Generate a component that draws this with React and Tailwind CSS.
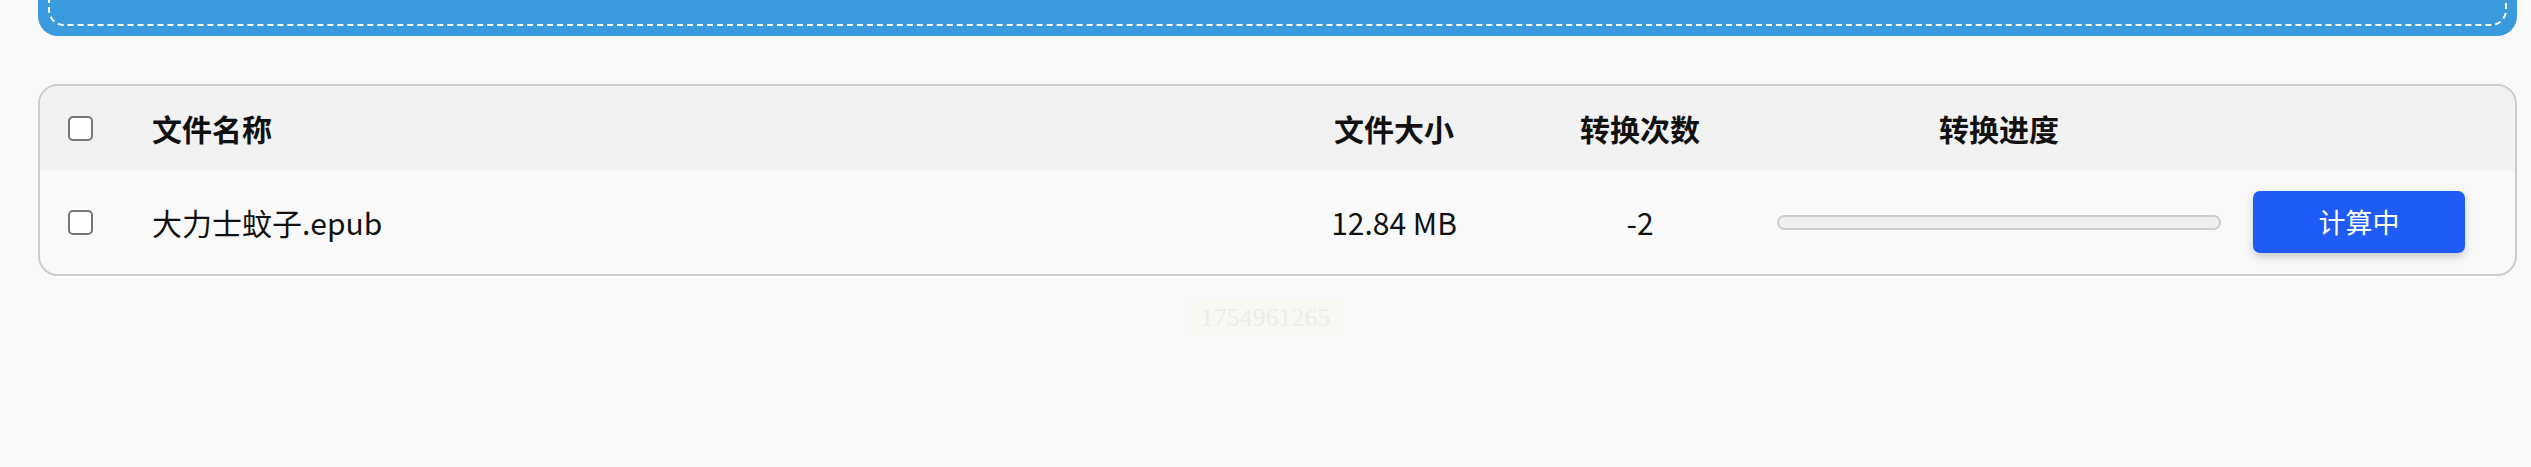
import { useState } from 'react';

const files = [{ id: 1, name: '大力士蚊子.epub', size: '12.84 MB', count: -2, progress: 0 }];

function Check({ checked, onChange }) {
  return (
    <input
      type="checkbox"
      checked={checked}
      onChange={onChange}
      className="appearance-none w-[25px] h-[25px] border-[2.5px] border-[#767676] rounded-[5px] bg-white"
    />
  );
}

export default function App() {
  const [selected, setSelected] = useState({});
  const allChecked = files.every((f) => selected[f.id]);

  return (
    <div
      className="min-h-screen bg-[#f9f9f9] pl-[38px] pr-[14px] pb-10 overflow-hidden"
      style={{ fontFamily: '"Noto Sans CJK SC", "Noto Sans", sans-serif' }}
    >
      {/* upload drop zone (scrolled past) */}
      <div className="mt-[-200px] h-[236px] rounded-[20px] bg-[#3a9ade] p-[10px]">
        <div className="h-full rounded-[16px] border-2 border-dashed border-white" />
      </div>

      {/* file table */}
      <div className="mt-[48px] rounded-[20px] border-2 border-[#cccccc] overflow-hidden bg-[#f9f9f9] text-[30px] text-[#111]">
        <div className="flex items-center h-[84px] bg-[#f2f2f2] font-bold">
          <div className="w-[81px] flex justify-center">
            <Check
              checked={allChecked}
              onChange={() =>
                setSelected(allChecked ? {} : Object.fromEntries(files.map((f) => [f.id, true])))
              }
            />
          </div>
          <div className="flex-1 pl-[31px]">文件名称</div>
          <div className="w-[252px] text-center">文件大小</div>
          <div className="w-[240px] text-center">转换次数</div>
          <div className="ml-[17px] w-[444px] text-center">转换进度</div>
          <div className="ml-[32px] w-[212px]" />
          <div className="w-[50px]" />
        </div>

        {files.map((f) => (
          <div key={f.id} className="flex items-center h-[104px]">
            <div className="w-[81px] flex justify-center">
              <Check
                checked={!!selected[f.id]}
                onChange={() => setSelected((s) => ({ ...s, [f.id]: !s[f.id] }))}
              />
            </div>
            <div className="flex-1 pl-[31px]">{f.name}</div>
            <div className="w-[252px] text-center">{f.size}</div>
            <div className="w-[240px] text-center">{f.count}</div>
            <div className="ml-[17px] w-[444px] h-[15px] rounded-full border-2 border-[#cccccc] bg-[#f0f0f0] overflow-hidden">
              <div className="h-full bg-[#1f5cf5]" style={{ width: `${f.progress}%` }} />
            </div>
            <button className="ml-[32px] w-[212px] h-[62px] rounded-[7px] bg-[#1f5cf5] text-white text-[27px] shadow-[0_4px_8px_rgba(0,0,0,0.18)]">
              计算中
            </button>
            <div className="w-[50px]" />
          </div>
        ))}
      </div>

      {/* build stamp */}
      <div className="mt-[24px] flex justify-center -ml-[24px]">
        <span
          className="px-[11px] leading-[35px] text-[26px] text-[#ececec] bg-[#f8f9f2]"
          style={{ fontFamily: '"Liberation Serif", serif' }}
        >
          1754961265
        </span>
      </div>
    </div>
  );
}
